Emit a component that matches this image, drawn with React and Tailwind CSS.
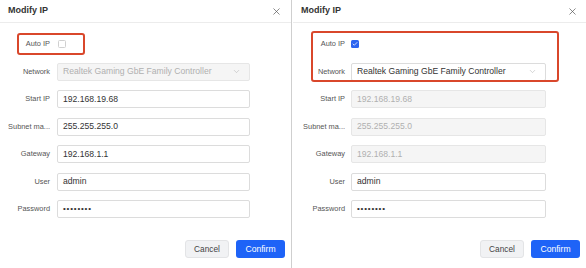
import React from 'react';
import { X, ChevronDown, Check } from 'lucide-react';

const font = { fontFamily: '"Liberation Sans", Arial, sans-serif' };

const Field = ({ label, value, disabled, select, password, right }) => (
  <div className="flex items-center h-[18px]">
    <div className={`${right ? 'w-[52px]' : 'w-[50px]'} shrink-0 text-right text-[7.4px] text-[#555] whitespace-nowrap`}>{label}</div>
    <div
      className={`${right ? 'ml-[6px] w-[195px]' : 'ml-[7px] w-[193px]'} h-[18px] flex items-center justify-between px-[5px] rounded-[2px] border ${
        disabled ? 'bg-[#f5f5f5] border-[#e6e6e6] text-[#b0b0b0]' : 'bg-white border-[#dcdcdc] text-[#333]'
      }`}
    >
      <span className={password ? 'text-[8px] tracking-[0.8px] leading-none' : 'text-[8.6px] whitespace-nowrap'}>{value}</span>
      {select && <ChevronDown size={9} strokeWidth={1.5} className="shrink-0 text-[#b5b5b5] mr-[3px]" />}
    </div>
  </div>
);

const Panel = ({ auto }) => (
  <div className="flex-1 h-full flex flex-col bg-white">
    <div className={`h-[23px] flex items-center justify-between pl-[8px] border-b border-[#ececec] ${auto ? 'pr-[8px]' : 'pr-[9px]'}`}>
      <span className="text-[9px] font-bold text-[#333]">Modify IP</span>
      <X size={11} strokeWidth={1.5} className="text-[#555]" />
    </div>
    <div className="flex flex-col pt-[12px] gap-[9.5px]">
      <div className="relative flex flex-col gap-[9.5px]">
        <div className="flex items-center h-[18px]">
          <div className={`${auto ? 'w-[52px]' : 'w-[50px]'} shrink-0 text-right text-[7.4px] text-[#555]`}>Auto IP</div>
          {auto ? (
            <div className="ml-[6px] w-[8px] h-[8px] rounded-[1.5px] bg-[#2d64f0] flex items-center justify-center">
              <Check size={6} strokeWidth={3} className="text-white" />
            </div>
          ) : (
            <div className="ml-[8px] w-[8px] h-[8px] rounded-[1.5px] border border-[#d0d0d0] bg-white" />
          )}
        </div>
        <Field label="Network" value="Realtek Gaming GbE Family Controller" select disabled={!auto} right={auto} />
        {auto ? (
          <div className="absolute left-[18px] top-[-4px] w-[248px] h-[51px] border-2 border-[#d9472b] rounded-[3px] pointer-events-none" />
        ) : (
          <div className="absolute left-[17px] top-[-2px] w-[68px] h-[22px] border-2 border-[#d9472b] rounded-[3px] pointer-events-none" />
        )}
      </div>
      <Field label="Start IP" value="192.168.19.68" disabled={auto} right={auto} />
      <Field label="Subnet ma..." value="255.255.255.0" disabled={auto} right={auto} />
      <Field label="Gateway" value="192.168.1.1" disabled={auto} right={auto} />
      <Field label="User" value="admin" right={auto} />
      <Field label="Password" value="••••••••" password right={auto} />
    </div>
    <div className="flex justify-end gap-[7px] pr-[6px] mt-[22px]">
      <button className="w-[44px] h-[18px] rounded-[3px] bg-[#f1f2f4] border border-[#e3e4e6] text-[8.3px] text-[#444]">Cancel</button>
      <button className="w-[49px] h-[18px] rounded-[3px] bg-[#1e63f7] text-[8.6px] text-white">Confirm</button>
    </div>
  </div>
);

export default function App() {
  return (
    <div className="w-[586px] h-[268px] flex bg-white" style={font}>
      <div className="w-[291px] h-full">
        <Panel auto={false} />
      </div>
      <div className="w-px h-full bg-[#cfcfcf]" />
      <div className="w-[1px]" />
      <div className="flex-1 h-full">
        <Panel auto />
      </div>
    </div>
  );
}
